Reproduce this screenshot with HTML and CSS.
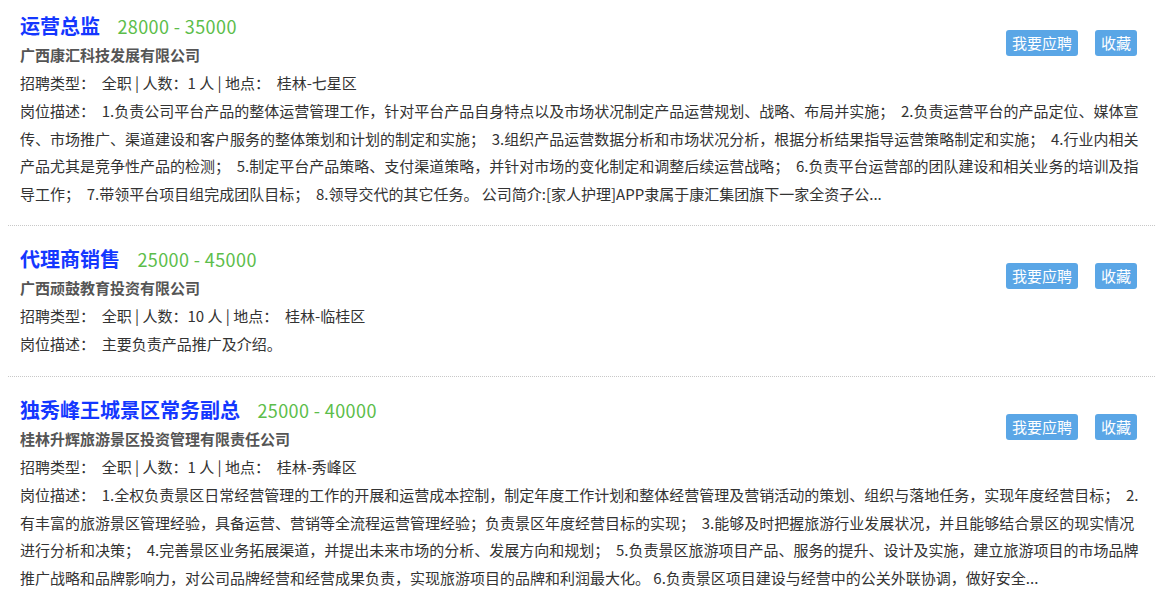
FILE: index.html
```html
<!DOCTYPE html>
<html lang="zh-CN">
<head>
<meta charset="UTF-8" />
<meta name="viewport" content="width=device-width, initial-scale=1.0"/>
<title>职位列表</title>
<link rel="stylesheet" href="styles.css">
</head>
<body>

<div class="job-list">

<div class="job-item first">
<div class="job-btns">
<button class="btn">我要应聘</button>
<button class="btn">收藏</button>
</div>
<div class="job-title">
<a href="#" class="job-name">运营总监</a>
<span class="salary">28000 - 35000</span>
</div>
<div class="company">广西康汇科技发展有限公司</div>
<div class="info">招聘类型：&nbsp; 全职 | 人数：1 人 | 地点：&nbsp; 桂林-七星区</div>
<div class="desc">岗位描述：&nbsp; 1.负责公司平台产品的整体运营管理工作，针对平台产品自身特点以及市场状况制定产品运营规划、战略、布局并实施；&nbsp; 2.负责运营平台的产品定位、媒体宣传、市场推广、渠道建设和客户服务的整体策划和计划的制定和实施；&nbsp; 3.组织产品运营数据分析和市场状况分析，根据分析结果指导运营策略制定和实施；&nbsp; 4.行业内相关产品尤其是竞争性产品的检测；&nbsp; 5.制定平台产品策略、支付渠道策略，并针对市场的变化制定和调整后续运营战略；&nbsp; 6.负责平台运营部的团队建设和相关业务的培训及指导工作；&nbsp; 7.带领平台项目组完成团队目标；&nbsp; 8.领导交代的其它任务。 公司简介:[家人护理]APP隶属于康汇集团旗下一家全资子公...</div>
</div>

<div class="job-item">
<div class="job-btns">
<button class="btn">我要应聘</button>
<button class="btn">收藏</button>
</div>
<div class="job-title">
<a href="#" class="job-name">代理商销售</a>
<span class="salary">25000 - 45000</span>
</div>
<div class="company">广西顽鼓教育投资有限公司</div>
<div class="info">招聘类型：&nbsp; 全职 | 人数：10 人 | 地点：&nbsp; 桂林-临桂区</div>
<div class="desc">岗位描述：&nbsp; 主要负责产品推广及介绍。</div>
</div>

<div class="job-item">
<div class="job-btns">
<button class="btn">我要应聘</button>
<button class="btn">收藏</button>
</div>
<div class="job-title">
<a href="#" class="job-name">独秀峰王城景区常务副总</a>
<span class="salary">25000 - 40000</span>
</div>
<div class="company">桂林升辉旅游景区投资管理有限责任公司</div>
<div class="info">招聘类型：&nbsp; 全职 | 人数：1 人 | 地点：&nbsp; 桂林-秀峰区</div>
<div class="desc">岗位描述：&nbsp; 1.全权负责景区日常经营管理的工作的开展和运营成本控制，制定年度工作计划和整体经营管理及营销活动的策划、组织与落地任务，实现年度经营目标；&nbsp; 2.有丰富的旅游景区管理经验，具备运营、营销等全流程运营管理经验；负责景区年度经营目标的实现；&nbsp; 3.能够及时把握旅游行业发展状况，并且能够结合景区的现实情况进行分析和决策；&nbsp; 4.完善景区业务拓展渠道，并提出未来市场的分析、发展方向和规划；&nbsp; 5.负责景区旅游项目产品、服务的提升、设计及实施，建立旅游项目的市场品牌推广战略和品牌影响力，对公司品牌经营和经营成果负责，实现旅游项目的品牌和利润最大化。 6.负责景区项目建设与经营中的公关外联协调，做好安全...</div>
</div>

</div>

</body>
</html>
```

FILE: styles.css
```css
* { box-sizing: border-box; }
body {
margin: 0 0 0 8px;
background-color: #fff;
color: #333;
font-family: "Microsoft YaHei", "Noto Sans CJK SC", sans-serif;
font-size: 15px;
overflow: hidden;
}
.job-list {
width: 100%;
}
.job-item {
padding: 18px 14px 18px 12px;
border-bottom: 1px dotted #c8c8c8;
}
.job-item.first {
padding-top: 11px;
}
.job-btns {
float: right;
display: flex;
gap: 17px;
margin: 19px 4px 0 0;
}
.btn {
font-family: inherit;
font-size: 15px;
line-height: 26px;
height: 26px;
padding: 0 6px;
background-color: #5aa6e6;
color: #fff;
border: none;
border-radius: 3px;
cursor: pointer;
}
.job-title {
height: 30px;
line-height: 30px;
}
.job-name {
font-size: 20px;
font-weight: bold;
color: #1437ff;
text-decoration: none;
margin-right: 14px;
}
.salary {
font-size: 18px;
letter-spacing: 0.4px;
color: #5cbd4a;
}
.company {
line-height: 28px;
font-weight: bold;
color: #555;
}
.info {
line-height: 28px;
}
.desc {
line-height: 27.6px;
}
```
